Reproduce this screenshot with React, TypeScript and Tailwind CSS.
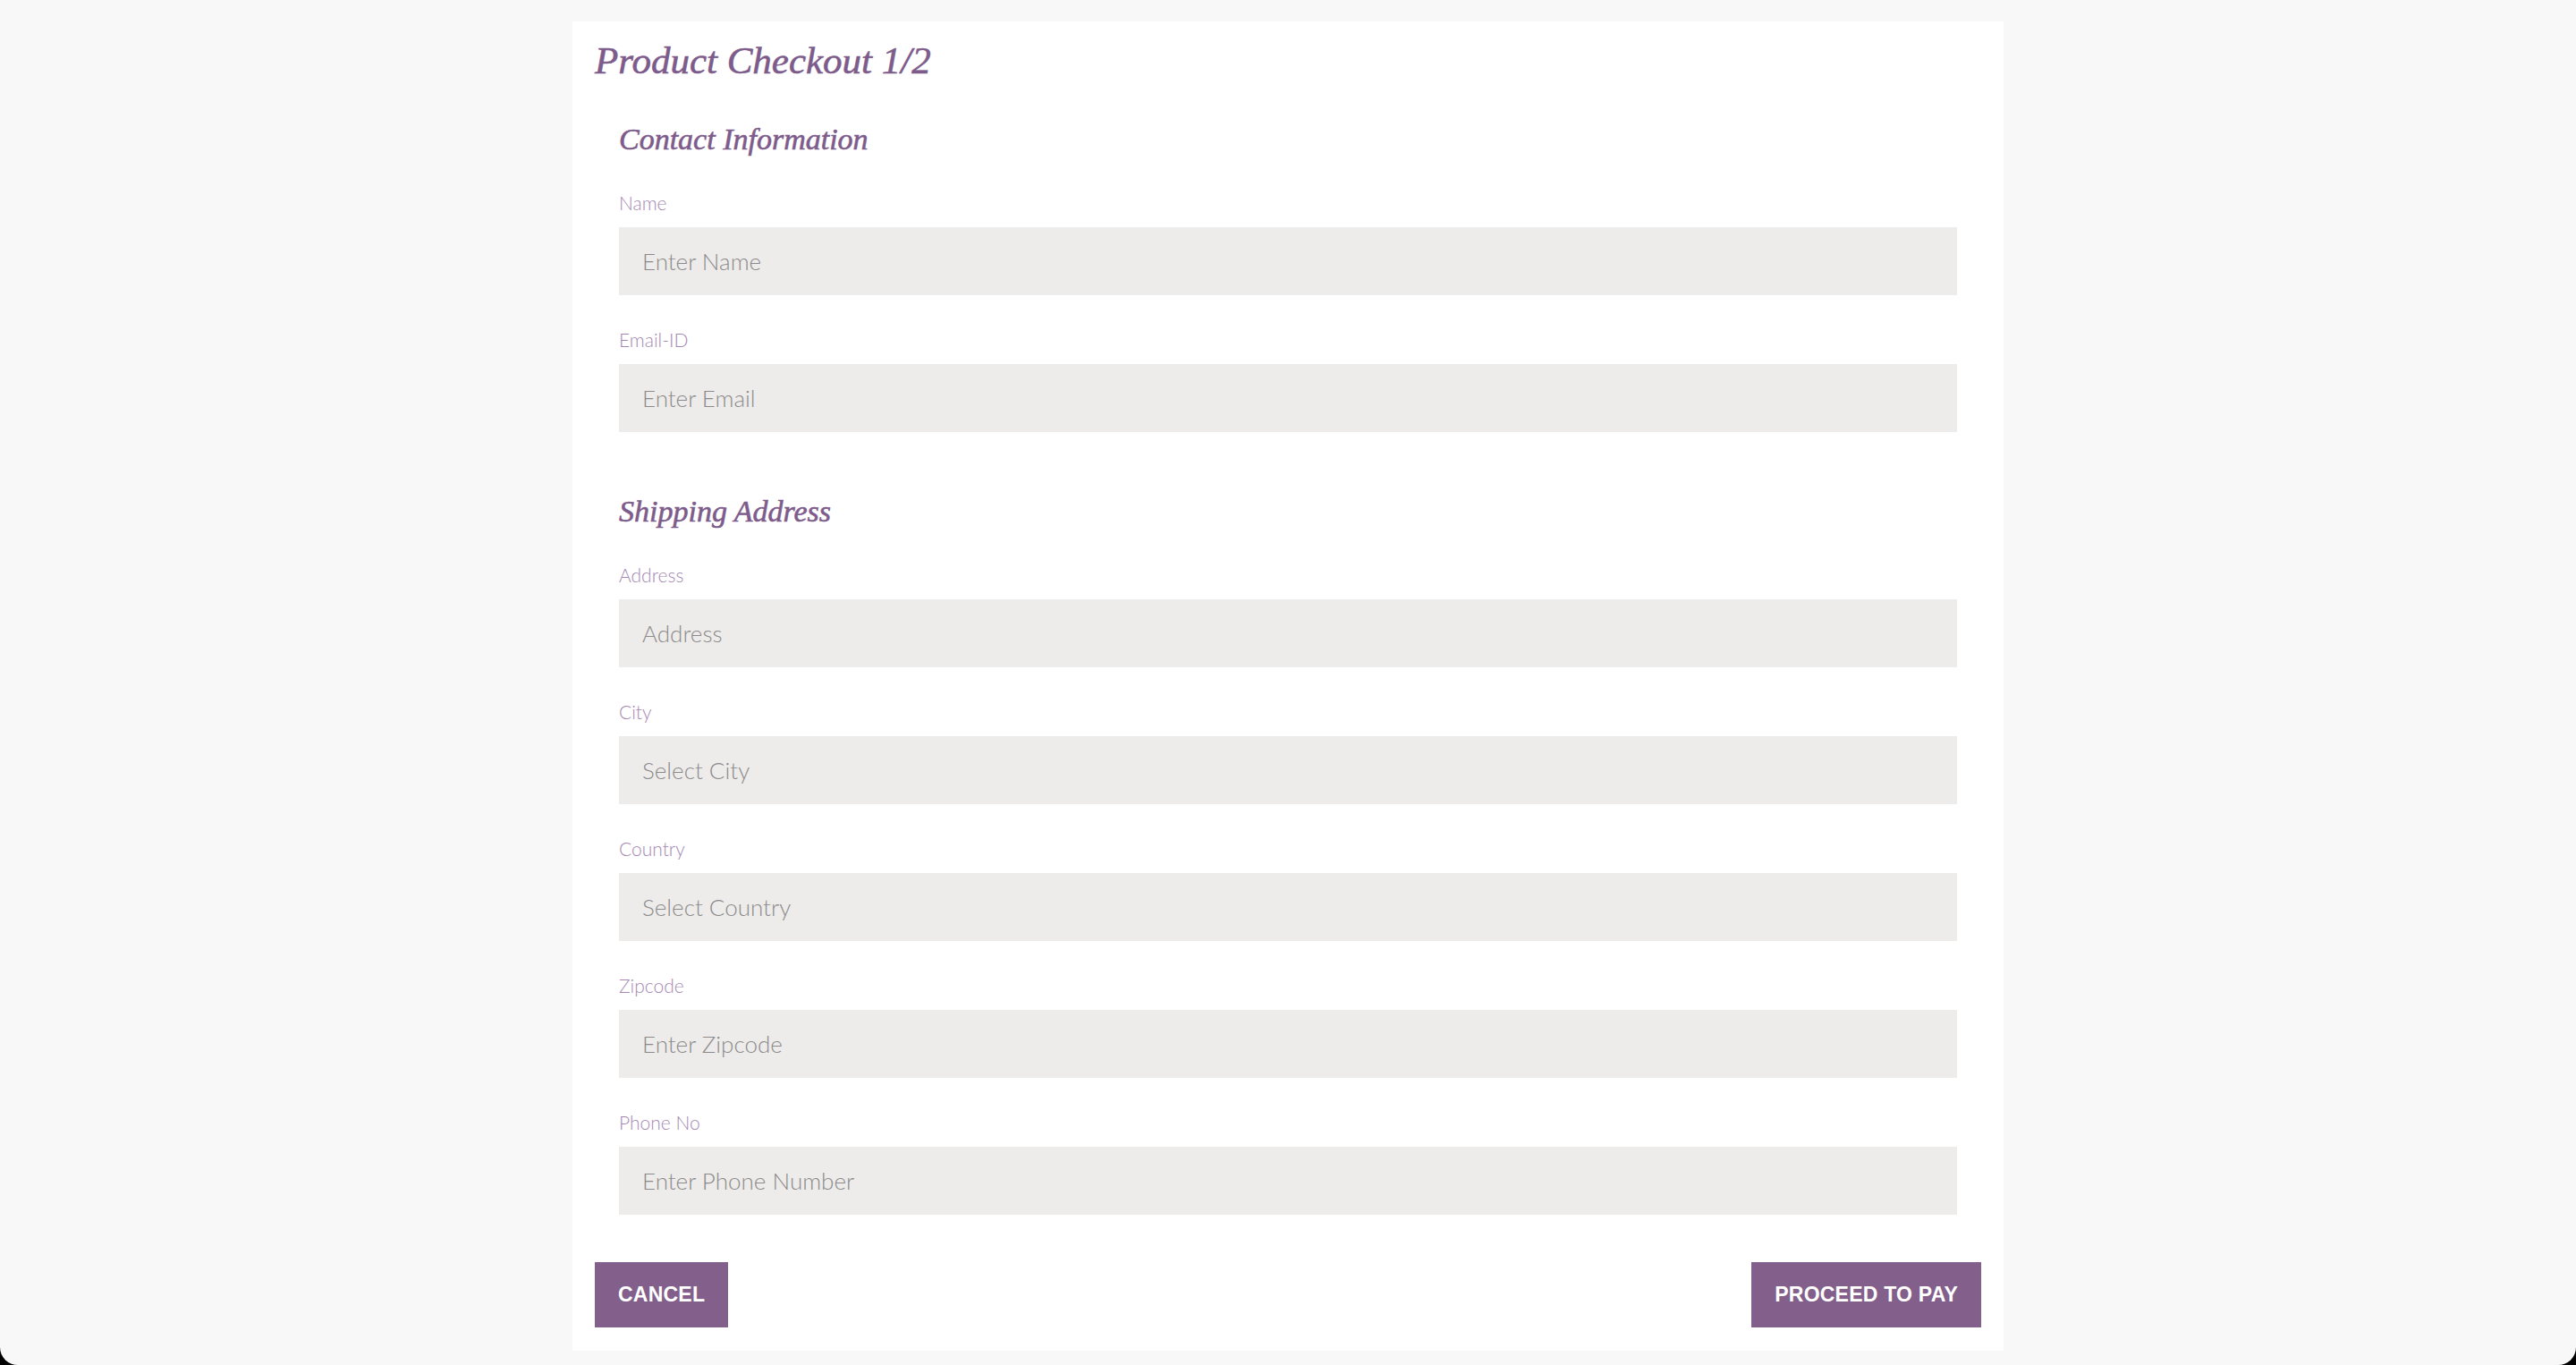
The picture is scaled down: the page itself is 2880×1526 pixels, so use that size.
import React from 'react';

const fields = {
    contact: [
        { label: 'Name', placeholder: 'Enter Name' },
        { label: 'Email-ID', placeholder: 'Enter Email' },
    ],
    shipping: [
        { label: 'Address', placeholder: 'Address' },
        { label: 'City', placeholder: 'Select City' },
        { label: 'Country', placeholder: 'Select Country' },
        { label: 'Zipcode', placeholder: 'Enter Zipcode' },
        { label: 'Phone No', placeholder: 'Enter Phone Number' },
    ],
};

const Field: React.FC<{ label: string; placeholder: string }> = ({ label, placeholder }) => (
    <div className="flex flex-col">
        <label className="font-['Lato',sans-serif] font-light text-[21px] leading-none text-[#a488b2] mb-[17px]">{label}</label>
        <input
            type="text"
            placeholder={placeholder}
            className="h-[76px] w-full bg-[#edecea] px-[26px] font-['Lato',sans-serif] font-light text-[26px] text-[#555] placeholder:text-[#8c8a8a] outline-none"
        />
    </div>
);

const Section: React.FC<{ title: string; items: { label: string; placeholder: string }[] }> = ({ title, items }) => (
    <section className="px-[27px]">
        <h2 className="font-['Liberation_Serif',serif] italic text-[34px] leading-none text-[#7d5b8b] [-webkit-text-stroke:0.6px_#7d5b8b] mb-[43px]">
            {title}
        </h2>
        <div className="flex flex-col gap-[39px]">
            {items.map((f) => (
                <Field key={f.label} label={f.label} placeholder={f.placeholder} />
            ))}
        </div>
    </section>
);

const App: React.FC = () => {
    return (
        <div className="bg-black">
            <div className="min-h-[1526px] bg-[#f8f8f8] rounded-b-[20px] pt-6">
                <div className="w-[1600px] mx-auto bg-white px-[25px] pt-[22px] pb-[26px]">
                    <h1 className="font-['Liberation_Serif',serif] italic text-[43px] leading-none text-[#7d5b8b] [-webkit-text-stroke:0.6px_#7d5b8b] mb-[50px]">
                        Product Checkout 1/2
                    </h1>

                    <Section title="Contact Information" items={fields.contact} />

                    <div className="h-[72px]" />

                    <Section title="Shipping Address" items={fields.shipping} />

                    <div className="flex justify-between mt-[53px]">
                        <button className="h-[73px] px-[26px] bg-[#83608b] text-white font-['Liberation_Sans',sans-serif] font-bold text-[23px] tracking-[0.01em] uppercase">
                            Cancel
                        </button>
                        <button className="h-[73px] px-[26px] bg-[#83608b] text-white font-['Liberation_Sans',sans-serif] font-bold text-[23px] tracking-[0.01em] uppercase">
                            Proceed to Pay
                        </button>
                    </div>
                </div>
            </div>
        </div>
    );
};

export default App;
